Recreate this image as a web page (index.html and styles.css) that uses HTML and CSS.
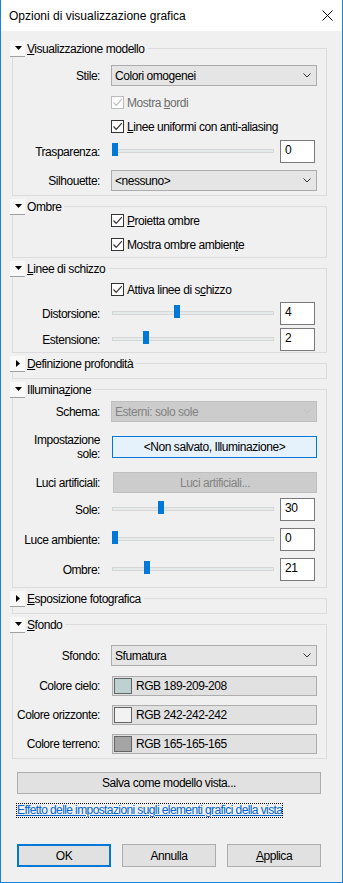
FILE: index.html
```html
<!DOCTYPE html>
<html lang="it">
<head>
    <meta charset="UTF-8">
    <meta name="viewport" content="width=device-width, initial-scale=1.0">
    <title>Opzioni di visualizzazione grafica</title>
    <link rel="stylesheet" href="styles.css">
</head>
<body>
<div class="window">
    <div class="titlebar">
        <span class="title">Opzioni di visualizzazione grafica</span>
        <svg class="close" width="11" height="11" viewBox="0 0 11 11"><path d="M0.5 0.5L10.5 10.5M10.5 0.5L0.5 10.5" stroke="#000" stroke-width="1" fill="none"/></svg>
    </div>

    <div class="content">
        <!-- Visualizzazione modello -->
        <div class="group">
            <div class="group-head">
                <span class="toggle"><svg width="7" height="4" viewBox="0 0 7 4"><polygon points="0,0 7,0 3.5,4" fill="#000"/></svg></span>
                <span class="group-title"><u>V</u>isualizzazione modello</span>
                <span class="group-line"></span>
            </div>
            <div class="group-body pad-model">
                <div class="row">
                    <span class="lbl">Stile:</span>
                    <div class="combo"><span>Colori omogenei</span><svg width="8" height="5" viewBox="0 0 8 5"><path d="M0.5 0.5L4 4L7.5 0.5" stroke="#333" fill="none"/></svg></div>
                </div>
                <div class="check disabled mt10">
                    <span class="box"><svg width="11" height="11" viewBox="0 0 11 11"><path d="M1.5 5.5L4.2 8.3L9.8 2.2" stroke="#bcbcbc" stroke-width="1.2" fill="none"/></svg></span>
                    <span>Mostra <u>b</u>ordi</span>
                </div>
                <div class="check mt11">
                    <span class="box"><svg width="11" height="11" viewBox="0 0 11 11"><path d="M1.5 5.5L4.2 8.3L9.8 2.2" stroke="#333" stroke-width="1.2" fill="none"/></svg></span>
                    <span><u>L</u>inee uniformi con anti-aliasing</span>
                </div>
                <div class="row mt7">
                    <span class="lbl">Trasparenza:</span>
                    <div class="slider"><div class="track"><span class="thumb" style="left:-1px"></span></div><div class="num">0</div></div>
                </div>
                <div class="row mt7">
                    <span class="lbl">Silhouette:</span>
                    <div class="combo"><span>&lt;nessuno&gt;</span><svg width="8" height="5" viewBox="0 0 8 5"><path d="M0.5 0.5L4 4L7.5 0.5" stroke="#333" fill="none"/></svg></div>
                </div>
            </div>
        </div>

        <!-- Ombre -->
        <div class="group">
            <div class="group-head">
                <span class="toggle"><svg width="7" height="4" viewBox="0 0 7 4"><polygon points="0,0 7,0 3.5,4" fill="#000"/></svg></span>
                <span class="group-title">Ombre</span>
                <span class="group-line"></span>
            </div>
            <div class="group-body pad-shadows">
                <div class="check">
                    <span class="box"><svg width="11" height="11" viewBox="0 0 11 11"><path d="M1.5 5.5L4.2 8.3L9.8 2.2" stroke="#333" stroke-width="1.2" fill="none"/></svg></span>
                    <span><u>P</u>roietta ombre</span>
                </div>
                <div class="check mt11">
                    <span class="box"><svg width="11" height="11" viewBox="0 0 11 11"><path d="M1.5 5.5L4.2 8.3L9.8 2.2" stroke="#333" stroke-width="1.2" fill="none"/></svg></span>
                    <span>Mostra ombre ambien<u>t</u>e</span>
                </div>
            </div>
        </div>

        <!-- Linee di schizzo -->
        <div class="group">
            <div class="group-head">
                <span class="toggle"><svg width="7" height="4" viewBox="0 0 7 4"><polygon points="0,0 7,0 3.5,4" fill="#000"/></svg></span>
                <span class="group-title"><u>L</u>inee di schizzo</span>
                <span class="group-line"></span>
            </div>
            <div class="group-body pad-sketch">
                <div class="check">
                    <span class="box"><svg width="11" height="11" viewBox="0 0 11 11"><path d="M1.5 5.5L4.2 8.3L9.8 2.2" stroke="#333" stroke-width="1.2" fill="none"/></svg></span>
                    <span>Attiva linee di s<u>c</u>hizzo</span>
                </div>
                <div class="row mt6">
                    <span class="lbl">Distorsione:</span>
                    <div class="slider"><div class="track"><span class="thumb" style="left:61px"></span></div><div class="num">4</div></div>
                </div>
                <div class="row mt3">
                    <span class="lbl">Estensione:</span>
                    <div class="slider"><div class="track"><span class="thumb" style="left:30px"></span></div><div class="num">2</div></div>
                </div>
            </div>
        </div>

        <!-- Definizione profondita -->
        <div class="group">
            <div class="group-head">
                <span class="toggle"><svg width="4" height="7" viewBox="0 0 4 7"><polygon points="0,0 4,3.5 0,7" fill="#000"/></svg></span>
                <span class="group-title"><u>D</u>efinizione profondità</span>
                <span class="group-line"></span>
            </div>
            <div class="group-body empty"></div>
        </div>

        <!-- Illuminazione -->
        <div class="group">
            <div class="group-head">
                <span class="toggle"><svg width="7" height="4" viewBox="0 0 7 4"><polygon points="0,0 7,0 3.5,4" fill="#000"/></svg></span>
                <span class="group-title">Illumina<u>z</u>ione</span>
                <span class="group-line"></span>
            </div>
            <div class="group-body pad-light">
                <div class="row">
                    <span class="lbl">Schema:</span>
                    <div class="combo disabled"><span>Esterni: solo sole</span><svg width="8" height="5" viewBox="0 0 8 5"><path d="M0.5 0.5L4 4L7.5 0.5" stroke="#bfbfbf" fill="none"/></svg></div>
                </div>
                <div class="row mt11">
                    <span class="lbl two-lines">Impostazione<br>sole:</span>
                    <div class="field-btn sun">&lt;Non salvato, Illuminazione&gt;</div>
                </div>
                <div class="row mt11">
                    <span class="lbl">Luci artificiali:</span>
                    <div class="field-btn lights">Luci artificiali...</div>
                </div>
                <div class="row mt5">
                    <span class="lbl">Sole:</span>
                    <div class="slider"><div class="track"><span class="thumb" style="left:45px"></span></div><div class="num">30</div></div>
                </div>
                <div class="row mt7">
                    <span class="lbl">Luce ambiente:</span>
                    <div class="slider"><div class="track"><span class="thumb" style="left:-1px"></span></div><div class="num">0</div></div>
                </div>
                <div class="row mt7">
                    <span class="lbl">Ombre:</span>
                    <div class="slider"><div class="track"><span class="thumb" style="left:31px"></span></div><div class="num">21</div></div>
                </div>
            </div>
        </div>

        <!-- Esposizione fotografica -->
        <div class="group">
            <div class="group-head">
                <span class="toggle"><svg width="4" height="7" viewBox="0 0 4 7"><polygon points="0,0 4,3.5 0,7" fill="#000"/></svg></span>
                <span class="group-title"><u>E</u>sposizione fotografica</span>
                <span class="group-line"></span>
            </div>
            <div class="group-body empty"></div>
        </div>

        <!-- Sfondo -->
        <div class="group">
            <div class="group-head">
                <span class="toggle"><svg width="7" height="4" viewBox="0 0 7 4"><polygon points="0,0 7,0 3.5,4" fill="#000"/></svg></span>
                <span class="group-title"><u>S</u>fondo</span>
                <span class="group-line"></span>
            </div>
            <div class="group-body pad-bg">
                <div class="row">
                    <span class="lbl">Sfondo:</span>
                    <div class="combo"><span>Sfumatura</span><svg width="8" height="5" viewBox="0 0 8 5"><path d="M0.5 0.5L4 4L7.5 0.5" stroke="#333" fill="none"/></svg></div>
                </div>
                <div class="row mt10">
                    <span class="lbl">Colore cielo:</span>
                    <div class="colorfield"><span class="swatch" style="background:rgb(189,209,208)"></span><span>RGB 189-209-208</span></div>
                </div>
                <div class="row mt9">
                    <span class="lbl">Colore orizzonte:</span>
                    <div class="colorfield"><span class="swatch" style="background:rgb(242,242,242)"></span><span>RGB 242-242-242</span></div>
                </div>
                <div class="row mt9">
                    <span class="lbl">Colore terreno:</span>
                    <div class="colorfield"><span class="swatch" style="background:rgb(165,165,165)"></span><span>RGB 165-165-165</span></div>
                </div>
            </div>
        </div>

        <div class="save">Salva come modello vista...</div>
        <div class="link-row"><a class="link" href="#">Effetto delle impostazioni sugli elementi grafici della vista</a></div>

        <div class="actions">
            <div class="btn default">OK</div>
            <div class="btn">Annulla</div>
            <div class="btn"><span><u>A</u>pplica</span></div>
        </div>
    </div>
</div>
</body>
</html>
```

FILE: styles.css
```css
html, body {
    margin: 0;
}
body {
    font-family: "Liberation Sans", Arial, sans-serif;
    font-size: 12px;
    letter-spacing: -0.45px;
    color: #000;
    background: #f0f0f0;
}
u {
    text-underline-offset: 1px;
}
.window {
    width: 343px;
    height: 883px;
    box-sizing: border-box;
    border: 1px solid #1883d7;
    border-top: 0;
    background: #f0f0f0;
}
.titlebar {
    height: 31px;
    background: #fff;
    display: flex;
    align-items: center;
    justify-content: space-between;
    padding: 0 9px 0 8px;
    letter-spacing: 0;
}
.content {
    padding: 9px 15px 0 9px;
}

/* collapsible groups */
.group {
    margin-top: 2px;
}
.group:first-child {
    margin-top: 0;
}
.group-head {
    display: flex;
    align-items: center;
    height: 17px;
    position: relative;
    z-index: 1;
}
.toggle {
    width: 15px;
    height: 16px;
    box-sizing: border-box;
    background: #f9f9f9;
    border-bottom: 1px solid #a0a0a0;
    display: flex;
    align-items: center;
    justify-content: center;
    padding-left: 1px;
}
.group-title {
    padding: 0 3px 0 2px;
    line-height: 16px;
    white-space: nowrap;
}
.group-line {
    flex: 1;
    height: 1px;
    background: #dcdcdc;
}
.group-body {
    margin: -8px 0 0 2px;
    border: 1px solid #dcdcdc;
    border-top: 0;
    padding: 0 9px 0 0;
}
.group-body.empty {
    height: 14px;
}
.pad-model { padding-top: 16px; padding-bottom: 4px; }
.pad-shadows { padding-top: 7px; padding-bottom: 6px; }
.pad-sketch { padding-top: 14px; padding-bottom: 1px; }
.pad-light { padding-top: 11px; padding-bottom: 6px; }
.pad-bg { padding-top: 20px; padding-bottom: 4px; }

.mt3 { margin-top: 3px; }
.mt5 { margin-top: 5px; }
.mt6 { margin-top: 6px; }
.mt7 { margin-top: 7px; }
.mt9 { margin-top: 9px; }
.mt10 { margin-top: 10px; }
.mt11 { margin-top: 11px; }

/* form rows */
.row {
    display: grid;
    grid-template-columns: 87px 206px;
    column-gap: 11px;
    align-items: center;
}
.lbl {
    display: flex;
    justify-content: flex-end;
    text-align: right;
    white-space: nowrap;
}
.lbl.two-lines {
    line-height: 14px;
}
.combo {
    height: 21px;
    box-sizing: border-box;
    border: 1px solid #acacac;
    background: #e5e5e5;
    display: flex;
    align-items: center;
    justify-content: space-between;
    padding: 0 5px 0 3px;
}
.combo.disabled {
    background: #cccccc;
    border-color: #bfbfbf;
    color: #838383;
}
.check {
    display: flex;
    align-items: center;
    gap: 3px;
    height: 13px;
    margin-left: 98px;
}
.box {
    width: 13px;
    height: 13px;
    box-sizing: border-box;
    border: 1px solid #333;
    background: #fff;
    display: flex;
}
.check.disabled {
    color: #6d6d6d;
}
.check.disabled .box {
    border-color: #bcbcbc;
}

/* sliders */
.slider {
    display: flex;
    height: 23px;
    padding-left: 1px;
}
.track {
    position: relative;
    width: 162px;
    height: 4px;
    box-sizing: border-box;
    margin-top: 9px;
    border: 1px solid #d6d6d6;
    background: #e7eaea;
}
.thumb {
    position: absolute;
    top: -7px;
    width: 6px;
    height: 13px;
    background: #0078d7;
}
.num {
    width: 35px;
    height: 23px;
    box-sizing: border-box;
    margin-left: 6px;
    border: 1px solid #7a7a7a;
    background: #fff;
    padding: 2px 4px;
    line-height: 15px;
}

.field-btn {
    box-sizing: border-box;
    display: flex;
    align-items: center;
    justify-content: center;
    border: 1px solid;
}
.field-btn.sun {
    height: 22px;
    margin-left: 1px;
    background: #e5f1fb;
    border-color: #0078d7;
}
.field-btn.lights {
    height: 21px;
    margin-left: 2px;
    background: #cccccc;
    border-color: #bfbfbf;
    color: #838383;
}
.colorfield {
    height: 20px;
    box-sizing: border-box;
    margin-left: 1px;
    border: 1px solid #adadad;
    background: #e1e1e1;
    display: flex;
    align-items: center;
    gap: 4px;
    padding-left: 1px;
}
.swatch {
    width: 18px;
    height: 16px;
    box-sizing: border-box;
    border: 1px solid #646464;
}

/* bottom area */
.save {
    margin: 13px 0 0 7px;
    width: 304px;
    height: 22px;
    box-sizing: border-box;
    border: 1px solid #adadad;
    background: #e1e1e1;
    display: flex;
    align-items: center;
    justify-content: center;
}
.link-row {
    margin-top: 9px;
    padding-left: 7px;
    height: 13px;
}
.link {
    display: inline-block;
    color: #0066cc;
    line-height: 13px;
    letter-spacing: -0.6px;
    outline: 1px dotted #000;
}
.actions {
    display: flex;
    gap: 11px;
    margin: 28px 0 0 7px;
}
.btn {
    width: 94px;
    height: 23px;
    box-sizing: border-box;
    border: 1px solid #adadad;
    background: #e1e1e1;
    display: flex;
    align-items: center;
    justify-content: center;
}
.btn.default {
    border: 2px solid #0078d7;
}
```
